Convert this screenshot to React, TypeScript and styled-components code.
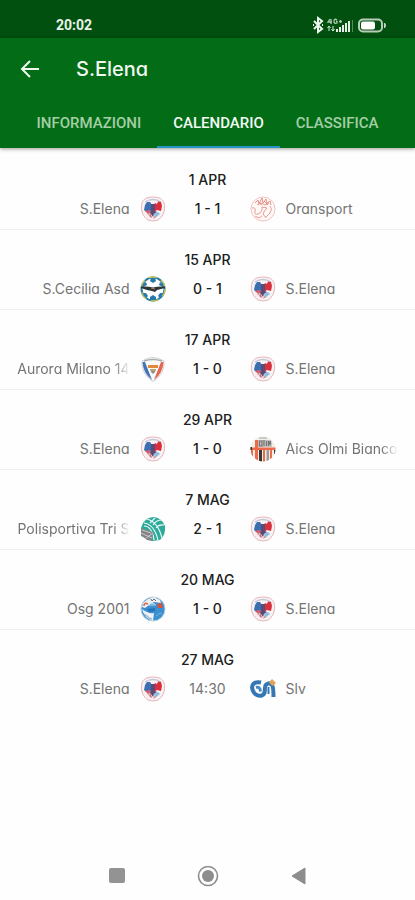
import React, { useState } from 'react';
import styled, { createGlobalStyle } from 'styled-components';

const GlobalStyle = createGlobalStyle`
  * { box-sizing: border-box; }
  body {
    margin: 0;
    background: #fefefe;
    font-family: Inter, "Open Sans", sans-serif;
    font-feature-settings: "cv11";
  }
  button { border: 0; padding: 0; background: none; font: inherit; color: inherit; cursor: pointer; }
  svg { display: block; }
`;

const Page = styled.div`
  display: flex;
  flex-direction: column;
  min-height: 100vh;
`;

const StatusBar = styled.div`
  display: flex;
  align-items: flex-end;
  justify-content: space-between;
  height: 38px;
  padding: 0 27px 4px 56px;
  background: #01500f;
  color: #e9f3e9;
`;

const Clock = styled.time`
  font: 700 14px/18px Roboto, sans-serif;
`;

const StatusIcons = styled.div`
  display: flex;
  align-items: center;
  height: 18px;
`;

const Header = styled.header`
  background: #036c17;
  color: #f1f8f0;
  box-shadow: 0 1px 4px rgba(0, 0, 0, 0.4);
`;

const Toolbar = styled.div`
  display: flex;
  align-items: center;
  gap: 34px;
  height: 61px;
  padding-left: 18px;
`;

const BackButton = styled.button`
  width: 24px;
  height: 24px;
`;

const Title = styled.h1`
  margin: 0;
  font-size: 20px;
  line-height: 28px;
  font-weight: 500;
`;

const Tabs = styled.div`
  display: flex;
  justify-content: center;
  height: 49px;
`;

const Tab = styled.button<{ $active: boolean }>`
  && {
    padding: 0 16px;
    border-bottom: 2px solid ${(p) => (p.$active ? '#2496c6' : 'transparent')};
    color: ${(p) => (p.$active ? '#f3faf3' : '#a3cfa5')};
    font: 500 15px/20px Roboto, sans-serif;
  }
`;

const Matches = styled.ol`
  flex: 1;
  margin: 0;
  padding: 2px 0 0;
  list-style: none;
`;

const Match = styled.li`
  padding: 21px 17px 7px;
  border-bottom: 1px solid #f0f0f0;
  &:last-child { border-bottom-color: transparent; }
`;

const MatchDate = styled.h2`
  margin: 0;
  color: #202020;
  font-size: 14px;
  line-height: 18px;
  font-weight: 500;
  text-align: center;
`;

const Fixture = styled.div`
  display: grid;
  grid-template-columns: minmax(0, 1fr) 26px 84px 26px minmax(0, 1fr);
  align-items: center;
  margin-top: 7px;
`;

const Team = styled.span<{ $side: 'home' | 'away'; $long?: boolean }>`
  overflow: hidden;
  margin: ${(p) => (p.$side === 'home' ? '0 10px 0 0' : '0 0 0 10px')};
  color: #747474;
  font-size: 14px;
  line-height: 20px;
  text-align: ${(p) => (p.$side === 'home' ? 'right' : 'left')};
  white-space: nowrap;
  mask-image: ${(p) => (p.$long ? 'linear-gradient(to left, transparent, #000 16px)' : 'none')};
`;

const Score = styled.span<{ $played: boolean }>`
  color: ${(p) => (p.$played ? '#202020' : '#747474')};
  font-size: 14px;
  line-height: 20px;
  font-weight: ${(p) => (p.$played ? 500 : 400)};
  text-align: center;
`;

const SystemNav = styled.nav`
  display: flex;
  justify-content: center;
  gap: 43px;
  height: 48px;
`;

const NavButton = styled.button`
  display: grid;
  place-items: center;
  width: 48px;
  height: 48px;
`;

const Crest = ({ children }: { children: React.ReactNode }) => (
  <svg width="26" height="26" viewBox="0 0 26 26" aria-hidden="true">{children}</svg>
);

const ElenaCrest = () => (
  <Crest>
    <path d="M13 1C7 1 3 3 2 7C0 14 3 21 8 24Q13 26 18 24C23 21 26 14 24 7C23 3 19 1 13 1Z" fill="#f7f1f4" stroke="#e6b6ba" />
    <path d="M5 6Q13 1 21 6" fill="none" stroke="#c3c8d6" strokeWidth="1.4" />
    <path d="M12 9L10 6L7 6L5 9L4 14L8 17H12Z" fill="#3a70b2" />
    <path d="M14 9L15 7L17 8L18 5.500L21 6L22 10L21 15L17 14L14 16Z" fill="#d92e3c" />
    <path d="M11 8H15V15L17 16L14 18L13 21L11 18L9 17L11 15Z" fill="#5a4a78" />
    <path d="M5 15L10 14L11 16L8 18ZM9 19L11 18L12 22L10 21Z" fill="#dc5f68" />
    <path d="M14 18L18 16L20 18L15 22Z" fill="#8dbedb" />
    <path d="M7 18L9 18L10 20ZM14 20L16 21L13 23Z" fill="#dd8a91" />
  </Crest>
);

const OransportCrest = () => (
  <Crest>
    <circle cx="13" cy="13" r="12" fill="#fff9f7" stroke="#f0c4bd" />
    <g fill="none" stroke="#e78f88">
      <path d="M5 7L8 4L9 8L12 2L13 7L16 3L17 7L20 5L21 9M7 9L11 7L15 9L19 7M8 6L12 9M14 5L18 9" />
      <path d="M2 12Q6 11 5 15Q4 19 8 18Q13 16 12 11L17 12Q14 15 13 18L16 22M20 10Q23 13 20 17L16 21M5 20L9 22L12 20" strokeWidth=".9" />
    </g>
  </Crest>
);

const CeciliaCrest = () => (
  <Crest>
    <circle cx="13" cy="13" r="11.5" fill="#fcfdfc" stroke="#267da3" strokeWidth="2" />
    <circle cx="13" cy="13" r="12" fill="none" stroke="#c5c15e" strokeWidth="1.4" strokeDasharray="8 5" />
    <path d="M11 2H15L16 5L13 7L10 5ZM3 8L6 6L7 9L3 11ZM23 8L20 6L19 9L23 11ZM3 17L6 17L8 20L6 22ZM23 17L20 17L18 20L20 22ZM10 21L13 19L16 21V24H10Z" fill="#2679aa" />
    <path d="M1 10.500Q8 10 13 11.500Q18 10 25 10.500V12L17 14L15 16L12 15L7 14L1 12Z" fill="#2d3536" />
    <path d="M11 12L15 13" stroke="#a88a5a" />
  </Crest>
);

const AuroraCrest = () => (
  <Crest>
    <path d="M2 5Q13-2 24 5Q25 17 14 25H12Q1 17 2 5Z" fill="#fafafa" stroke="#cdcfd2" />
    <path d="M4 5Q13 2 22 5" fill="none" stroke="#a8abad" strokeWidth="1.6" />
    <path d="M2.500 6L5 6L12 24Q3 17 2.500 6Z" fill="#4273b8" />
    <path d="M23.500 6L21 6L14 24Q23 17 23.500 6Z" fill="#e4644c" />
    <path d="M8 9H18V12H8Z" fill="#e08a3c" />
    <path d="M10 13H16L15 16L13 18L11 16Z" fill="#8e8e82" />
    <path d="M11 14H15" stroke="#e8bd4c" />
  </Crest>
);

const OlmiCrest = () => (
  <Crest>
    <clipPath id="olmi-disc"><circle cx="13" cy="13" r="12.500" /></clipPath>
    <g clipPath="url(#olmi-disc)">
      <path d="M0 0H26V26H0Z" fill="#f4eee9" />
      <path d="M5 4H8V12H5ZM0 11.500H26V14H0ZM1 14H3V22H1ZM5 14H8V25H5ZM13 14H15V26H13ZM20 14H22V24H20Z" fill="#e96b4b" />
      <path d="M9 14H12V26H9ZM0 11H2V14H0ZM24 14H26V18H24Z" fill="#363838" />
      <path d="M16.500 14H19V26H16.500Z" fill="#9c9a98" />
      <path d="M8 4H21L22 11H8Z" fill="#c4c1be" />
      <path d="M9.500 5V10H12V5ZM14 4V10M16.500 5V10M18.500 10V5L20.500 9V5" fill="none" stroke="#747676" strokeWidth="1.2" />
      <path d="M9 2H17" stroke="#99aaa6" />
    </g>
  </Crest>
);

const PolisportivaCrest = () => (
  <Crest>
    <path d="M3 7Q7 1 14 1Q22 2 25 10Q26 19 20 24L12 25L1 20V12Z" fill="#2fa999" />
    <g fill="none" stroke="#e5faf6" strokeWidth="1.2">
      <path d="M4 7Q14 8 18 24M7 3Q18 6 22 22M4 10Q12 10 14 24M13 9Q16 4 22 4M16 12Q19 8 24 9M10 7L15 2" />
    </g>
    <path d="M1 12L13 16L12 25L7 24L1 19Z" fill="#848487" />
    <path d="M2 14L11 17M1 17L12 22M6 22L13 17" stroke="#cbc7cc" />
  </Crest>
);

const OsgCrest = () => (
  <Crest>
    <circle cx="13" cy="13" r="12" fill="#3a8fd0" stroke="#b1d1e4" />
    <path d="M3 7L8 3L14 1L20 4L21 7L14 6L9 9L5 12L2 11Z" fill="#f2f0ee" />
    <path d="M11 3L12 5L14 3L16 5" fill="none" stroke="#676c75" />
    <path d="M4 10Q4 6 8 8" fill="none" stroke="#d36b5c" strokeWidth="1.6" />
    <path d="M8 9H16M10 7L15 8" stroke="#b7dbef" />
    <path d="M2 13Q8 18 14 17L13 25Q4 22 2 13Z" fill="#edf2f6" />
    <path d="M4 18L7 20L9 22L12 23" fill="none" stroke="#9fb6d2" strokeWidth="1.4" />
    <path d="M7 13L15 12L15 15L9 16Z" fill="#2574ba" />
    <path d="M17 8L22 7L23 12L18 12Z" fill="#cf5540" />
    <path d="M16 20L20 17L22 18" fill="none" stroke="#73b5df" />
  </Crest>
);

const SlvCrest = () => (
  <Crest>
    <path d="M11 6.500C4 5 1 9 2.500 13.500C4 19 9 20.500 12 19.500C16 18 14.500 14 15 11C15.500 7.500 20 6 22 9Q23.500 11 23.500 21" fill="none" stroke="#3576b5" strokeWidth="4" />
    <path d="M6 11.500Q10 10 10.500 15.500" fill="none" stroke="#4b87bf" strokeWidth="3" />
    <path d="M18.500 11V18" stroke="#3576b5" strokeWidth="2" />
    <path d="M22 3L26 7L22.500 10L19 6.500Z" fill="#e3a057" />
  </Crest>
);

type TeamInfo = { name: string; crest: React.ComponentType; long?: boolean };

const elena: TeamInfo = { name: 'S.Elena', crest: ElenaCrest };

const matches: { date: string; home: TeamInfo; result: string; away: TeamInfo; played: boolean }[] = [
  { date: '1 APR', home: elena, result: '1 - 1', away: { name: 'Oransport', crest: OransportCrest }, played: true },
  { date: '15 APR', home: { name: 'S.Cecilia Asd', crest: CeciliaCrest }, result: '0 - 1', away: elena, played: true },
  { date: '17 APR', home: { name: 'Aurora Milano 14', crest: AuroraCrest, long: true }, result: '1 - 0', away: elena, played: true },
  { date: '29 APR', home: elena, result: '1 - 0', away: { name: 'Aics Olmi Bianco', crest: OlmiCrest, long: true }, played: true },
  { date: '7 MAG', home: { name: 'Polisportiva Tri S', crest: PolisportivaCrest, long: true }, result: '2 - 1', away: elena, played: true },
  { date: '20 MAG', home: { name: 'Osg 2001', crest: OsgCrest }, result: '1 - 0', away: elena, played: true },
  { date: '27 MAG', home: elena, result: '14:30', away: { name: 'Slv', crest: SlvCrest }, played: false },
];

const tabs = ['INFORMAZIONI', 'CALENDARIO', 'CLASSIFICA'];

export default function App() {
  const [active, setActive] = useState('CALENDARIO');
  return (
    <Page>
      <GlobalStyle />
      <StatusBar>
        <Clock>20:02</Clock>
        <StatusIcons>
          <svg width="76" height="18" viewBox="0 0 76 18" aria-hidden="true">
            <path d="M2 5L10 13L6 16V2L10 5L2 13M1 9H2M10 9H11" fill="none" stroke="#edf5ed" strokeWidth="2" />
            <path d="M18 3L16 6H20M19 3V8M25 4Q22 2 22 5.500Q22 8 25 7V5.500H24M27 5.500H30M28.500 4V7" fill="none" stroke="#a9c9ad" strokeWidth="1.3" />
            <path d="M17 15V11M15.500 12L17 10L18.500 12M21 10V15M19.500 13L21 15L22.500 13" fill="none" stroke="#d4e5d5" strokeWidth="1" />
            <path d="M24 13H26V16H24ZM27 11H29V16H27ZM30 9H32V16H30ZM33 7H35V16H33ZM36 5H38V16H36Z" fill="#e5efe5" />
            <path d="M40.500 4V16" stroke="#568a5d" />
            <rect x="47" y="3.500" width="23" height="12" rx="4" fill="none" stroke="#b8ccb9" strokeWidth="2" />
            <rect x="49" y="5.500" width="14" height="8" rx="2" fill="#fff" />
            <path d="M72 7H73Q75 9.500 73 12H72Z" fill="#c4d5c5" />
          </svg>
        </StatusIcons>
      </StatusBar>
      <Header>
        <Toolbar>
          <BackButton aria-label="Indietro">
            <svg width="24" height="24" viewBox="0 0 24 24" aria-hidden="true">
              <path d="M21 12H5M12 4L4 12L12 20" fill="none" stroke="#f1f8f0" strokeWidth="2" />
            </svg>
          </BackButton>
          <Title>S.Elena</Title>
        </Toolbar>
        <Tabs role="tablist">
          {tabs.map((tab) => (
            <Tab key={tab} role="tab" aria-selected={tab === active} $active={tab === active} onClick={() => setActive(tab)}>
              {tab}
            </Tab>
          ))}
        </Tabs>
      </Header>
      <Matches>
        {matches.map(({ date, home, away, result, played }) => (
          <Match key={date}>
            <MatchDate>{date}</MatchDate>
            <Fixture>
              <Team $side="home" $long={home.long}>{home.name}</Team>
              <home.crest />
              <Score $played={played}>{result}</Score>
              <away.crest />
              <Team $side="away" $long={away.long}>{away.name}</Team>
            </Fixture>
          </Match>
        ))}
      </Matches>
      <SystemNav aria-label="Sistema">
        <NavButton aria-label="Recenti">
          <svg width="22" height="22" viewBox="0 0 22 22"><rect x="3" y="3" width="16" height="15" rx="2" fill="#939393" /></svg>
        </NavButton>
        <NavButton aria-label="Home">
          <svg width="22" height="22" viewBox="0 0 22 22">
            <circle cx="11" cy="11" r="9.500" fill="none" stroke="#8d8d8d" strokeWidth="1.6" />
            <circle cx="11" cy="11" r="6" fill="#8d8d8d" />
          </svg>
        </NavButton>
        <NavButton aria-label="Indietro (sistema)">
          <svg width="22" height="22" viewBox="0 0 22 22"><path d="M4 11L17 3V19Z" fill="#8d8d8d" stroke="#8d8d8d" strokeLinejoin="round" /></svg>
        </NavButton>
      </SystemNav>
    </Page>
  );
}
